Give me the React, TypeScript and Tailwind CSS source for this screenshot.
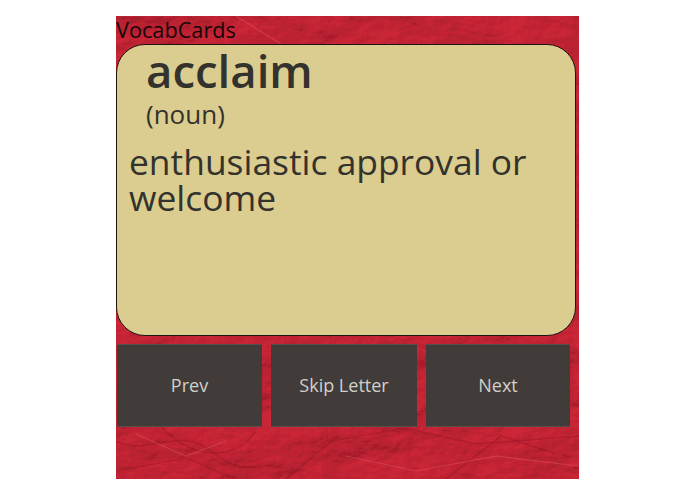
function PaperTexture() {
  return (
    <svg className="absolute inset-0 h-full w-full" viewBox="0 0 463 463" aria-hidden="true">
      <filter id="paper" x="0" y="0" width="100%" height="100%">
        <feTurbulence type="fractalNoise" baseFrequency="0.014 0.022" numOctaves="6" seed="23" />
        <feDiffuseLighting surfaceScale="6" diffuseConstant="1" lightingColor="#cf2739">
          <feDistantLight azimuth="235" elevation="58" />
        </feDiffuseLighting>
      </filter>
      <filter id="soft">
        <feGaussianBlur stdDeviation="0.7" />
      </filter>
      <rect width="463" height="463" filter="url(#paper)" />
      <g fill="none" stroke="#8f1422" strokeOpacity="0.45" strokeWidth="1.2" filter="url(#soft)">
        <path d="M0 425 C30 440 60 412 90 432 S120 455 160 448" />
        <path d="M45 410 C75 445 120 445 140 415" />
        <path d="M170 463 L215 425 L290 412 L360 428 L463 420" />
        <path d="M330 463 L385 420 L440 438" />
        <path d="M0 455 L70 442 L120 463" />
      </g>
      <g fill="none" stroke="#e6606e" strokeOpacity="0.4" strokeWidth="1.2" filter="url(#soft)">
        <path d="M20 418 L70 440 L110 425" />
        <path d="M230 440 L300 455 L380 440 L463 450" />
        <path d="M120 0 L165 28" />
      </g>
    </svg>
  )
}

function CardButton({ label }: { label: string }) {
  return (
    <button className="flex h-[83px] items-center justify-center border-t border-b border-[#55504c] bg-[#413c39] text-[18px] text-[#d2cfcb]">
      {label}
    </button>
  )
}

export default function App() {
  return (
    <div className="flex h-[494px] w-[695px] justify-center bg-white pt-4 font-['Open_Sans',sans-serif]">
      <div className="relative h-[463px] w-[463px] overflow-hidden bg-[#c52437]">
        <PaperTexture />
        <div className="relative flex flex-col">
          <div className="h-7 text-[21.7px] leading-7 text-[#170607]">VocabCards</div>
          <div className="h-[292px] w-[460px] rounded-[29px] border-[1.5px] border-[#1c1410] bg-[#dacd8f] text-[#33322d]">
            <div className="pl-[29px] text-[45.5px] leading-[51px] font-semibold">acclaim</div>
            <div className="pl-[29px] pt-[2px] text-[26px] leading-[33px]">(noun)</div>
            <div className="pl-[12px] pt-[12px] text-[35.4px] leading-[36px]">enthusiastic approval or welcome</div>
          </div>
          <div className="mt-[8px] grid grid-cols-[145px_146px_144px] gap-[9px] pl-px">
            <CardButton label="Prev" />
            <CardButton label="Skip Letter" />
            <CardButton label="Next" />
          </div>
        </div>
      </div>
    </div>
  )
}
